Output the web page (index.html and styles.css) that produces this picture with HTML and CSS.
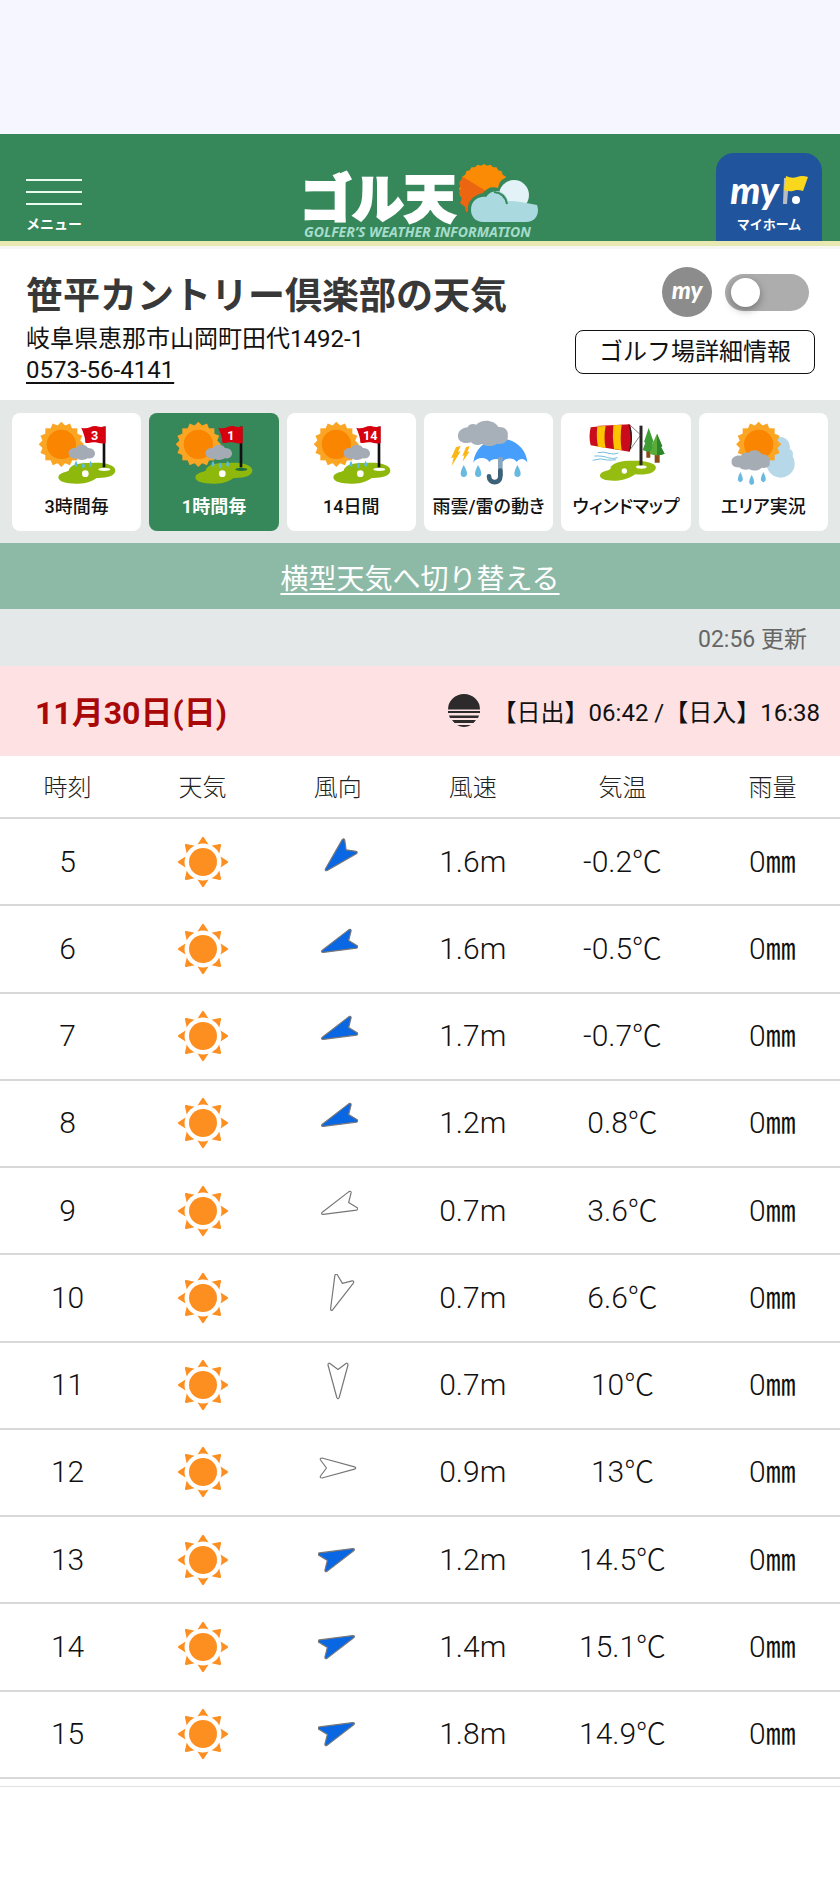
FILE: index.html
```html
<!DOCTYPE html>
<html lang="ja">
<head>
<meta charset="utf-8">
<meta name="viewport" content="width=device-width, initial-scale=1">
<title>笹平カントリー倶楽部の天気 | ゴル天</title>
<link rel="stylesheet" href="styles.css">
</head>
<body>
<svg class="defs" aria-hidden="true">
  <symbol id="spiky" viewBox="-70 -70 140 140" overflow="visible">
    <g fill="#fba524"><rect x="-48" y="-48" width="96" height="96"/><rect x="-48" y="-48" width="96" height="96" transform="rotate(22.5)"/><rect x="-48" y="-48" width="96" height="96" transform="rotate(45)"/><rect x="-48" y="-48" width="96" height="96" transform="rotate(67.5)"/></g>
    <circle r="44" fill="#f98500"/>
  </symbol>
  <symbol id="golf" viewBox="100 76 261 198">
    <use href="#spiky" x="115" y="79" width="140" height="140"/>
    <path d="M176 248c3-18 35-14 32-24 8-18 40-20 66-19 32-4 72 3 73 22 1 18-30 24-56 23-14 10-31 17-55 17-34 1-60-5-60-19z" fill="#8fb80d"/>
    <path d="M207 177c-2-12 10-18 22-17 6-12 28-13 36 0 12-1 22 8 21 17-1 12-12 15-22 14-10 6-22 6-31 1-12 2-24-4-26-15z" fill="#a5abb5"/>
    <g fill="#5bbde0"><path d="M229 198q9 15 0 18-9-3 0-18zM251 203q9 15 0 18-9-3 0-18zM273 198q9 15 0 18-9-3 0-18z"/></g>
    <circle cx="257" cy="237" r="10" fill="#fff"/>
    <ellipse cx="314" cy="224" rx="18" ry="5" fill="currentColor"/>
    <path d="M309 96h8v122h-8z" fill="#111"/>
    <path d="M245 99c18 6 28-6 44-5 11 3 20 5 29 0v51c-12 4-22-1-32-2-10 0-20 4-29 1 0-16-6-30-12-45z" fill="#d7000f"/>
  </symbol>
  <symbol id="sun" viewBox="-26 -26 52 52">
    <circle r="14" fill="#fd8f21"/>
    <g fill="#fd8f21">
      <path id="ray" d="M-1-24.500Q0-26 1-24.500L5.500-17.500Q0-19.500-5.500-17.500z"/>
      <use href="#ray" transform="rotate(45)"/><use href="#ray" transform="rotate(90)"/><use href="#ray" transform="rotate(135)"/><use href="#ray" transform="rotate(180)"/><use href="#ray" transform="rotate(225)"/><use href="#ray" transform="rotate(270)"/><use href="#ray" transform="rotate(315)"/>
    </g>
  </symbol>
  <symbol id="arrow" viewBox="-20 -20 40 40"><path d="M-1.200 16.500L-10-16Q-10-18.500-8-17.500L0-11.500 8-17.500Q10-18.500 10-16L1.200 16.500Q0 19-1.200 16.500z" stroke="#777" stroke-width="1.200" stroke-linejoin="round"/></symbol>
</svg>

<div class="statusbar"></div>
<header class="site-header">
  <button class="menu" type="button"><span class="bar"></span><span class="bar"></span><span class="bar"></span>メニュー</button>
  <a class="logo" href="#">
    <span class="logo-row">
      <span class="logo-name">ゴル天</span>
      <svg class="logo-mark" viewBox="0 0 82 60" aria-hidden="true">
        <g fill="#fb8b05"><path id="hex" d="M26 1L47.700 13.500V38.500L26 51 4.300 38.500V13.500z"/><use href="#hex" transform="rotate(15 26 26)"/><use href="#hex" transform="rotate(30 26 26)"/><use href="#hex" transform="rotate(45 26 26)"/></g>
        <path d="M5 14L33 31 14 47 8 49 7 44 2 40 4 35 1 30 3 25 1 20z" fill="#ec6510"/>
        <path d="M10 50q-2-16 15-20 6-8 15-5 1-12 16-11 14 2 17 17 10 6 9 20-2 11-16 11H24q-12-2-14-12z" fill="#36885a"/>
        <circle cx="56" cy="32" r="15" fill="#e2f2f6"/>
        <path d="M13 47c0-9 7-14 15-13 6-9 19-8 22 4 9 0 18 2 29 4 3 8-1 17-11 17H25c-7 0-12-5-12-12z" fill="#aad9df"/>
        <path d="M36 29q11 1 13 12" fill="none" stroke="#36885a" stroke-width="2"/>
      </svg>
    </span>
    <span class="tagline">GOLFER’S WEATHER INFORMATION</span>
  </a>
  <a class="myhome" href="#">
    <span class="myhome-row"><span class="my">my</span>
      <svg class="flag" viewBox="0 0 26 32" aria-hidden="true"><path d="M2 3h5l-2 26H1z" fill="#b9bcc4"/><path d="M4 1q6 3 11 1 5-2 11 0l-5 14q-6-2-10 0-4 1-9-1z" fill="#f9d71c"/><circle cx="14" cy="25" r="4" fill="#fff"/></svg>
    </span>
    マイホーム
  </a>
</header>

<main>
  <section class="course">
    <div class="course-info">
      <h1>笹平カントリー倶楽部の天気</h1>
      <p>岐阜県恵那市山岡町田代1492-1</p>
      <p><a href="tel:0573-56-4141">0573-56-4141</a></p>
    </div>
    <div class="course-side">
      <label class="my-toggle"><span class="my-badge">my</span><input type="checkbox" role="switch" aria-label="マイホームに登録"></label>
      <button class="detail" type="button">ゴルフ場詳細情報</button>
    </div>
  </section>

  <nav class="tabs">
    <a href="#"><svg viewBox="100 76 261 198" aria-hidden="true"><use href="#golf" x="100" y="76" width="261" height="198"/><text x="285" y="136" class="flag-num">3</text></svg>3時間毎</a>
    <a href="#" class="active" aria-current="page"><svg viewBox="100 76 261 198" aria-hidden="true"><use href="#golf" x="100" y="76" width="261" height="198"/><text x="283" y="136" class="flag-num">1</text></svg>1時間毎</a>
    <a href="#"><svg viewBox="100 76 261 198" aria-hidden="true"><use href="#golf" x="100" y="76" width="261" height="198"/><text x="287" y="136" class="flag-num">14</text></svg>14日間</a>
    <a href="#"><svg viewBox="75 76 261 198" aria-hidden="true">
      <path d="M160 204c4-40 34-68 78-74 48 3 82 34 84 74-8-14-24-14-32-2-8-14-34-14-42 0-8-12-32-12-40 0-8-16-38-16-48 2z" fill="#489ffb"/>
      <path d="M241 188v56" stroke="#8ba5bb" stroke-width="14"/>
      <path d="M241 228v17c0 23-34 23-34 0" fill="none" stroke="#3c627a" stroke-width="14" stroke-linecap="round"/>
      <path d="M114 126c-1-18 14-27 29-28 4-10 16-12 26-8 15-18 54-16 66 7 20-2 31 12 28 24 4 20-14 30-32 26-13 10-32 9-45 1-12 6-27 2-32-5-16 5-39 1-40-17z" fill="#a7b0b8"/>
      <path d="M108 158l14-5-8 19 8-2-27 44 6-26-8 3zM138 158l11-4-7 18 7-2-21 31 5-19-6 2z" fill="#fbb614"/>
      <g fill="#69bae0"><path d="M131 211q20 34 0 36-18-2 0-36zM174 211q20 34 0 36-18-2 0-36zM292 211q20 34 0 36-18-2 0-36z"/></g>
    </svg>雨雲/雷の動き</a>
    <a href="#"><svg viewBox="487 76 261 198" aria-hidden="true">
      <g fill="#8b4b18"><path d="M680 165h12v24h-12zM705 178h15v26h-15z"/></g>
      <path d="M687 100l15 42-4 2 8 22q-18 10-37 0l8-22-4-2z" fill="#3f9d35"/><path d="M712 117l16 38-4 2 11 20q-22 9-46 0l10-20-4-2z" fill="#5bab38"/><path d="M712 117l16 38-4 2 11 20q-12 5-23 5z" fill="#2e862c"/>
      <path d="M541 241c4-16 36-10 32-25 16-18 48-18 68-18 30-1 68 5 68 21-4 20-36 22-62 20-20 12-34 18-58 19-28 1-50-4-48-17z" fill="#95bc10"/>
      <circle cx="614" cy="229" r="8" fill="#fff"/><ellipse cx="665" cy="217" rx="16" ry="5" fill="#fff"/>
      <path d="M664 93v119" stroke="#292525" stroke-width="9"/>
      <path d="M632 92l30 28M632 164l30-42" stroke="#444" stroke-width="2"/>
      <path d="M513 98q60-7 118-9c8 27 7 55-1 82q-62-9-117-19c-5-17-4-37 0-54z" fill="#c90b1c"/>
      <path d="M533 96l25-3q-7 36 0 67l-23-4q-6-28-2-60zM581 92l25-2q-6 40 0 77l-23-4q-6-36-2-71z" fill="#fcc500"/>
      <path d="M626 89q14 42 1 82 8-2 10-40-1-38-11-42z" fill="#2b1719"/>
      <g fill="none" stroke="#75bddd" stroke-width="3"><path d="M534 174q20-4 34 2 16 5 28-1M524 184q26-1 40 5 15 5 30 0M519 197q24-8 44-1 14 1 26-1"/></g>
    </svg>ウィンドマップ</a>
    <a href="#"><svg viewBox="900 76 261 198" aria-hidden="true">
      <g fill="#b6d8e9"><circle cx="1079" cy="157" r="31"/><circle cx="1082" cy="207" r="42"/><circle cx="1102" cy="178" r="17"/></g>
      <use href="#spiky" x="946" y="79" width="140" height="140"/>
      <path d="M935 205c-3-16 12-25 28-22 6-9 14-10 21-9 15-13 36-8 41 5 15-2 27 10 24 23 3 13-9 20-24 17-10 10-26 11-37 5-14 3-24 1-30-6-12 1-22-4-23-13z" fill="#a5acb4"/>
      <g fill="#69bae0"><path d="M961 232q15 28 0 31-15-3 0-31zM995 240q15 28 0 31-15-3 0-31zM1030 232q15 28 0 31-15-3 0-31z"/></g>
    </svg>エリア実況</a>
  </nav>

  <div class="switch-view"><a href="#">横型天気へ切り替える</a></div>
  <p class="updated">02:56 更新</p>

  <section class="day">
    <div class="day-head">
      <h2>11月30日(日)</h2>
      <p class="sun-times">
        <svg viewBox="0 0 34 34" aria-hidden="true"><path d="M1 15.500a16 15.500 0 0 1 32 0zM1 17h32v2H1zM2 21.500h30l-1 2.500H3zM5 26h24l-2.500 3h-19zM10 31h14q-7 4-14 0z" fill="#2d2a2b"/></svg>
        <span>【日出】06:42 /【日入】16:38</span>
      </p>
    </div>
    <table class="hourly">
      <colgroup><col><col><col><col><col class="wide"><col></colgroup>
      <thead><tr><th scope="col">時刻</th><th scope="col">天気</th><th scope="col">風向</th><th scope="col">風速</th><th scope="col">気温</th><th scope="col">雨量</th></tr></thead>
      <tbody>
        <tr><td>5</td><td><svg class="sun" role="img" aria-label="晴れ"><use href="#sun"/></svg></td><td><svg class="wind strong" viewBox="-20 -20 40 40"><use href="#arrow" x="-20" y="-20" width="40" height="40" transform="rotate(45)"/></svg></td><td>1.6m</td><td>-0.2℃</td><td>0<span class="unit">㎜</span></td></tr>
        <tr><td>6</td><td><svg class="sun" role="img" aria-label="晴れ"><use href="#sun"/></svg></td><td><svg class="wind strong" viewBox="-20 -20 40 40"><use href="#arrow" x="-20" y="-20" width="40" height="40" transform="rotate(67.5)"/></svg></td><td>1.6m</td><td>-0.5℃</td><td>0<span class="unit">㎜</span></td></tr>
        <tr><td>7</td><td><svg class="sun" role="img" aria-label="晴れ"><use href="#sun"/></svg></td><td><svg class="wind strong" viewBox="-20 -20 40 40"><use href="#arrow" x="-20" y="-20" width="40" height="40" transform="rotate(67.5)"/></svg></td><td>1.7m</td><td>-0.7℃</td><td>0<span class="unit">㎜</span></td></tr>
        <tr><td>8</td><td><svg class="sun" role="img" aria-label="晴れ"><use href="#sun"/></svg></td><td><svg class="wind strong" viewBox="-20 -20 40 40"><use href="#arrow" x="-20" y="-20" width="40" height="40" transform="rotate(67.5)"/></svg></td><td>1.2m</td><td>0.8℃</td><td>0<span class="unit">㎜</span></td></tr>
        <tr><td>9</td><td><svg class="sun" role="img" aria-label="晴れ"><use href="#sun"/></svg></td><td><svg class="wind" viewBox="-20 -20 40 40"><use href="#arrow" x="-20" y="-20" width="40" height="40" transform="rotate(67.5)"/></svg></td><td>0.7m</td><td>3.6℃</td><td>0<span class="unit">㎜</span></td></tr>
        <tr><td>10</td><td><svg class="sun" role="img" aria-label="晴れ"><use href="#sun"/></svg></td><td><svg class="wind" viewBox="-20 -20 40 40"><use href="#arrow" x="-20" y="-20" width="40" height="40" transform="rotate(22.5)"/></svg></td><td>0.7m</td><td>6.6℃</td><td>0<span class="unit">㎜</span></td></tr>
        <tr><td>11</td><td><svg class="sun" role="img" aria-label="晴れ"><use href="#sun"/></svg></td><td><svg class="wind" viewBox="-20 -20 40 40"><use href="#arrow" x="-20" y="-20" width="40" height="40"/></svg></td><td>0.7m</td><td>10℃</td><td>0<span class="unit">㎜</span></td></tr>
        <tr><td>12</td><td><svg class="sun" role="img" aria-label="晴れ"><use href="#sun"/></svg></td><td><svg class="wind" viewBox="-20 -20 40 40"><use href="#arrow" x="-20" y="-20" width="40" height="40" transform="rotate(-90)"/></svg></td><td>0.9m</td><td>13℃</td><td>0<span class="unit">㎜</span></td></tr>
        <tr><td>13</td><td><svg class="sun" role="img" aria-label="晴れ"><use href="#sun"/></svg></td><td><svg class="wind strong" viewBox="-20 -20 40 40"><use href="#arrow" x="-20" y="-20" width="40" height="40" transform="rotate(-112.5)"/></svg></td><td>1.2m</td><td>14.5℃</td><td>0<span class="unit">㎜</span></td></tr>
        <tr><td>14</td><td><svg class="sun" role="img" aria-label="晴れ"><use href="#sun"/></svg></td><td><svg class="wind strong" viewBox="-20 -20 40 40"><use href="#arrow" x="-20" y="-20" width="40" height="40" transform="rotate(-112.5)"/></svg></td><td>1.4m</td><td>15.1℃</td><td>0<span class="unit">㎜</span></td></tr>
        <tr><td>15</td><td><svg class="sun" role="img" aria-label="晴れ"><use href="#sun"/></svg></td><td><svg class="wind strong" viewBox="-20 -20 40 40"><use href="#arrow" x="-20" y="-20" width="40" height="40" transform="rotate(-112.5)"/></svg></td><td>1.8m</td><td>14.9℃</td><td>0<span class="unit">㎜</span></td></tr>
      </tbody>
    </table>
  </section>
</main>
</body>
</html>
```
FILE: styles.css
```css
* { box-sizing: border-box; }

body {
  margin: 0;
  background: #fff;
  color: #111;
  font-family: Roboto, "Noto Sans CJK JP", sans-serif;
  font-size: 24px;
}

h1, h2, p { margin: 0; }
a { color: inherit; }
button { font: inherit; color: inherit; background: none; cursor: pointer; }
svg { display: block; }
.defs { position: absolute; width: 0; height: 0; }

.statusbar { height: 134px; background: #f5f6ff; }

/* Header */
.site-header {
  display: grid;
  grid-template-columns: 1fr auto 1fr;
  align-items: end;
  height: 112px;
  background: #36885a;
  border-bottom: 5px solid #e8e8b2;
  box-shadow: 0 3px 0 #f6f6f3;
  color: #fff;
}
.menu {
  justify-self: start;
  width: 56px;
  margin-left: 26px;
  padding: 0 0 8px;
  border: 0;
  color: #fff;
  font-size: 14px;
  font-weight: 700;
  line-height: 18px;
  text-align: center;
  white-space: nowrap;
}
.bar { display: block; height: 2px; margin-bottom: 10px; background: #e9fbee; }
.logo { display: flex; flex-direction: column; width: 240px; text-decoration: none; }
.logo-row { display: flex; align-items: flex-end; justify-content: space-between; height: 60px; }
.logo-name {
  font-family: Roboto, "Noto Sans CJK JP", sans-serif;
  font-size: 52px;
  font-weight: 900;
  line-height: 44px;
  white-space: nowrap;
  -webkit-text-stroke: 2px #fff;
}
.logo-mark { flex: none; width: 82px; height: 60px; }
.tagline {
  padding-left: 4px;
  color: #a6dccb;
  font-family: "Noto Sans", sans-serif;
  font-size: 14px;
  font-weight: 700;
  font-style: italic;
  line-height: 18px;
  white-space: nowrap;
}
.myhome {
  justify-self: end;
  display: flex;
  flex-direction: column;
  align-items: center;
  width: 106px;
  height: 88px;
  margin-right: 18px;
  padding-top: 18px;
  border-radius: 18px 18px 0 0;
  background: #20549c;
  font-size: 13px;
  font-weight: 700;
  line-height: 20px;
  text-decoration: none;
}
.myhome-row { display: flex; align-items: flex-start; gap: 3px; height: 44px; }
.my {
  font-family: Lato, sans-serif;
  font-size: 38px;
  font-weight: 900;
  font-style: italic;
  line-height: 36px;
}
.flag { width: 26px; height: 32px; margin-top: 4px; }

/* Course */
.course { display: flex; justify-content: space-between; padding: 21px 25px 14px 26px; }
.course-info { padding-top: 8px; white-space: nowrap; line-height: 31px; }
.course h1 { margin-bottom: 5px; color: #383838; font-size: 37px; line-height: 44px; }
.course-info a { text-underline-offset: 4px; text-decoration-thickness: 2px; }
.course-side { display: flex; flex-direction: column; align-items: flex-end; gap: 13px; }
.my-toggle { display: flex; align-items: center; gap: 13px; padding-right: 6px; }
.my-badge {
  width: 50px;
  height: 50px;
  border-radius: 50%;
  background: #8c8c8c;
  color: #fff;
  font-family: Lato, sans-serif;
  font-size: 24px;
  font-weight: 900;
  font-style: italic;
  line-height: 46px;
  text-align: center;
}
.my-toggle input {
  appearance: none;
  width: 84px;
  height: 37px;
  margin: 0;
  padding: 4px 6px;
  border-radius: 19px;
  background: #adadad;
}
.my-toggle input::before {
  content: "";
  display: block;
  width: 29px;
  height: 29px;
  border-radius: 50%;
  background: #fff;
  box-shadow: 0 3px 8px rgba(0, 0, 0, 0.35);
}
.my-toggle input:checked { background: #36885a; }
.my-toggle input:checked::before { margin-left: auto; }
.detail {
  width: 240px;
  height: 44px;
  padding: 0;
  border: 1px solid #111;
  border-radius: 8px;
  line-height: 42px;
  white-space: nowrap;
}

/* Tabs */
.tabs {
  display: grid;
  grid-template-columns: repeat(6, 1fr);
  gap: 8px;
  padding: 13px 12px 12px;
  background: #e4e8e6;
}
.tabs a {
  display: flex;
  flex-direction: column;
  align-items: center;
  gap: 4px;
  min-width: 0;
  padding: 7px 0 8px;
  border-radius: 8px;
  background: #fff;
  font-size: 18px;
  font-weight: 500;
  font-feature-settings: "palt";
  line-height: 33px;
  text-decoration: none;
  white-space: nowrap;
}
.tabs a svg { width: 87px; height: 66px; color: #fff; }
.tabs .active { background: #36885a; color: #fff; font-weight: 700; }
.tabs .active svg { color: #1f6f3a; }
.flag-num { fill: #fff; font-size: 38px; font-weight: 700; text-anchor: middle; }

/* Forecast */
.switch-view {
  padding-top: 8px;
  background: #8dbaa7;
  color: #fff;
  font-size: 28px;
  line-height: 58px;
  text-align: center;
}
.switch-view a { text-underline-offset: 4px; text-decoration-thickness: 2px; }
.updated {
  padding: 5px 33px 0 0;
  background: #e4e8e8;
  color: #666;
  font-size: 23px;
  line-height: 52px;
  text-align: right;
}
.day-head {
  display: flex;
  align-items: center;
  justify-content: space-between;
  height: 90px;
  padding: 4px 20px 0 35px;
  background: #fee1e2;
}
.day-head h2 { color: #a90808; font-size: 32px; font-weight: 700; line-height: 40px; }
.sun-times { display: flex; align-items: center; gap: 12px; line-height: 36px; white-space: nowrap; }
.sun-times svg { width: 34px; height: 34px; margin-bottom: 4px; }

.hourly {
  width: 100%;
  height: 1023px;
  table-layout: fixed;
  border-collapse: collapse;
  text-align: center;
}
.hourly .wide { width: 19.6%; }
.hourly th, .hourly td { padding: 0; border-bottom: 2px solid #d8d8d8; line-height: 36px; }
.hourly th { height: 62px; padding-top: 3px; color: #222; font-size: 24px; font-weight: 300; }
.hourly td { font-size: 30px; font-weight: 300; }
.unit { font-weight: 400; }
.sun { width: 52px; height: 52px; margin: 0 auto; }
.wind { width: 40px; height: 40px; margin: 0 auto 8px; fill: #fff; }
.wind.strong { fill: #0967e4; }
.day { padding-bottom: 7px; border-bottom: 1px solid #e2e2e2; }
```
